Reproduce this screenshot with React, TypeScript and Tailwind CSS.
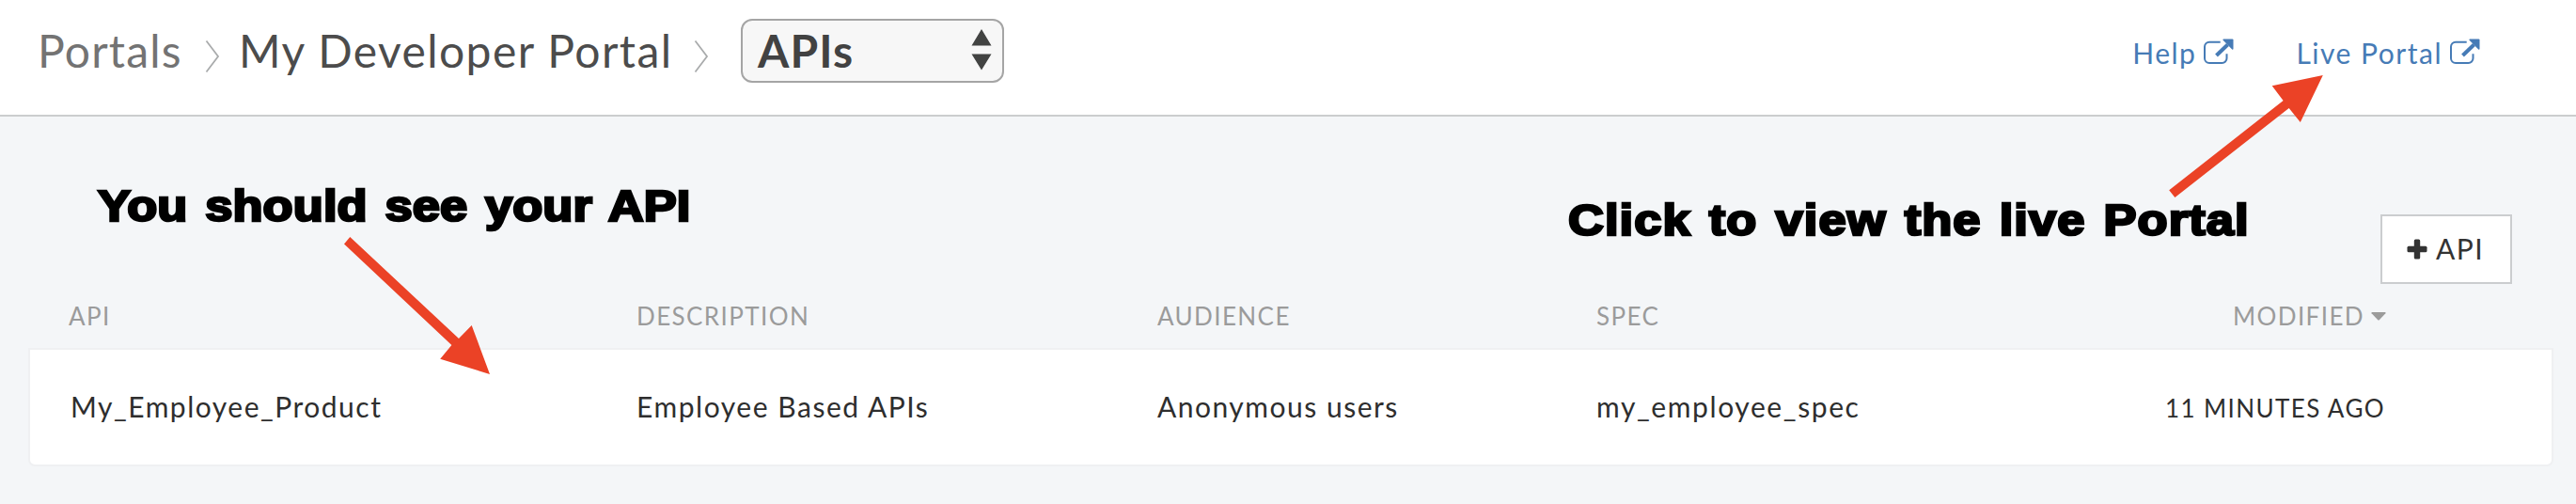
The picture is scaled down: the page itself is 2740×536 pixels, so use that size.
import type { ReactNode } from 'react';

function Chevron({ className }: { className: string }) {
  return (
    <svg className={className} width="16" height="36" viewBox="0 0 16 36" fill="none">
      <path d="M1.5 1.5 L14 18 L1.5 34.5" stroke="#a9abac" strokeWidth="1.8" />
    </svg>
  );
}

function ExternalIcon() {
  return (
    <svg width="32" height="28" viewBox="0 0 32 28" fill="none" className="mt-[3px] shrink-0">
      <path d="M17.7 3.7 H6 A5 5 0 0 0 1 8.7 V21 A5 5 0 0 0 6 26 H19.5 A5 5 0 0 0 24.5 21 V16.3" stroke="#467bb6" strokeWidth="2" />
      <path d="M13.5 18 L25.5 6.5" stroke="#467bb6" strokeWidth="4" />
      <path d="M21 0.5 H30.5 A1 1 0 0 1 31.5 1.5 V11 Q31.2 12 30.2 11.4 L20.6 1.8 Q20 0.8 21 0.5 Z" fill="#467bb6" />
    </svg>
  );
}

function HeaderLink({ children }: { children: ReactNode }) {
  return (
    <a href="#" className="flex items-start gap-[8px] text-[30px] leading-[36px] tracking-[1.5px] text-[#467bb6]">
      {children}
      <ExternalIcon />
    </a>
  );
}

const columns = 'grid grid-cols-[604px_554px_467px_400px_441px]';

export default function App() {
  return (
    <div className="relative flex h-[536px] w-[2740px] flex-col overflow-hidden bg-[#f4f6f8] font-['Lato',sans-serif]">
      <header className="flex h-[124px] items-start justify-between border-b-2 border-[#cbcdce] bg-white pl-[40px] pr-[102px] pt-[20px]">
        <nav className="flex text-[48px] leading-[68px]">
          <span className="w-[178px] tracking-[1.2px] text-[#737373]">Portals</span>
          <Chevron className="mt-[22px]" />
          <span className="ml-[20px] w-[484px] tracking-[1.42px] text-[#4c4c4c]">My Developer Portal</span>
          <Chevron className="mt-[22px]" />
          <button className="ml-[34px] flex h-[68px] w-[280px] items-center justify-between rounded-[12px] border-2 border-[#a5a5a5] bg-[#f7f7f7] pl-[16px] pr-[11px] text-left font-bold leading-[68px] tracking-[1.1px] text-[#424242]">
            APIs
            <svg width="22" height="44" viewBox="0 0 22 44" fill="#424342" className="mb-[2px]">
              <path d="M11 0 L21.5 17.5 H0.5 Z M0.5 26.5 H21.5 L11 43.5 Z" />
            </svg>
          </button>
        </nav>
        <div className="flex gap-[66px] pt-[18px]">
          <HeaderLink>Help</HeaderLink>
          <HeaderLink>Live Portal</HeaderLink>
        </div>
      </header>

      <div className="flex justify-end pr-[68px] pt-[104px]">
        <button className="flex h-[74px] w-[140px] items-center border-2 border-[#cbcdcf] bg-white pl-[26px] text-[30px] leading-[36px] tracking-[1.5px] text-[#333]">
          <svg width="22" height="22" viewBox="0 0 22 22" fill="#333" className="mr-[9px]">
            <rect x="0.5" y="7.8" width="21" height="6.4" rx="1.5" />
            <rect x="7.8" y="0.5" width="6.4" height="21" rx="1.5" />
          </svg>
          <span className="pb-[2px]">API</span>
        </button>
      </div>

      <div className={`${columns} mt-[18px] ml-[73px] h-[50px] text-[26px] leading-[32px] tracking-[1.4px] text-[#9b9b9b]`}>
        <span>API</span>
        <span>DESCRIPTION</span>
        <span>AUDIENCE</span>
        <span>SPEC</span>
        <span className="flex items-start justify-end">
          <span>MODIFIED</span>
          <svg width="16" height="9" viewBox="0 0 16 9" fill="#9b9b9b" className="ml-[7px] mr-px mt-[12px]">
            <path d="M1 0 H15 Q16 0.3 15.4 1.2 L9 8 Q8 9 7 8 L0.6 1.2 Q0 0.3 1 0 Z" />
          </svg>
        </span>
      </div>
      <div className={`${columns} ml-[30px] h-[126px] w-[2686px] items-center rounded-b-[7px] border-2 border-[#eff0f2] bg-white pb-[2px] pl-[41px] text-[30px] leading-[36px] tracking-[1.5px] text-[#2e2e2e]`}>
        <span className="pl-[2px]">My_Employee_Product</span>
        <span className="tracking-[1.54px]">Employee Based APIs</span>
        <span>Anonymous users</span>
        <span className="tracking-[1.6px]">my_employee_spec</span>
        <span className="justify-self-end pr-[2px] pt-[3px] text-[26px] leading-[32px] tracking-[1.4px]">11 MINUTES AGO</span>
      </div>

      <div className="absolute left-0 top-0">
        <svg width="2740" height="536" viewBox="0 0 2740 536" fill="#eb4226">
          <path d="M372.3 252 L366 259.5 L480.4 367 L468.2 381.7 L521 398 L501.7 346 L488 360 Z" />
          <path d="M2307.2 202.3 L2313.4 210 L2434.7 115 L2446.8 130 L2470.8 80 L2416.7 91.2 L2428.6 107 Z" />
        </svg>
      </div>
      <p className="absolute left-[104px] top-[192px] origin-left scale-x-114 whitespace-nowrap font-['Liberation_Sans',sans-serif] text-[46px] font-bold leading-[54px] tracking-[0.1px] text-black [-webkit-text-stroke:2.6px_black] [word-spacing:3.5px]">
        You should see your API
      </p>
      <p className="absolute left-[1668px] top-[207px] origin-left scale-x-114 whitespace-nowrap font-['Liberation_Sans',sans-serif] text-[46px] font-bold leading-[54px] tracking-[0.95px] text-black [-webkit-text-stroke:2.6px_black] [word-spacing:3px]">
        Click to view the live Portal
      </p>
    </div>
  );
}
